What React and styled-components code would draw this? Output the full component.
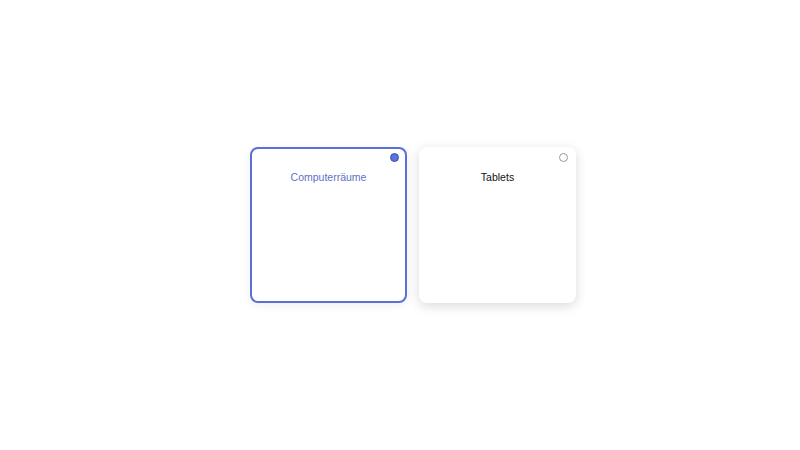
import React, { useState } from "react";
import styled, { createGlobalStyle } from "styled-components";

const Global = createGlobalStyle`
  html, body { margin: 0; padding: 0; background: #fff; }
  body { font-family: "Liberation Sans", Arial, sans-serif; }
`;

const Page = styled.div`
  width: 800px;
  height: 450px;
  display: flex;
  align-items: center;
  justify-content: center;
  padding-left: 26px;
  box-sizing: border-box;
`;

const Options = styled.div`
  display: flex;
  gap: 12px;
`;

const Card = styled.label`
  position: relative;
  width: 157px;
  height: 156px;
  box-sizing: border-box;
  border-radius: 8px;
  background: #fff;
  border: 2px solid ${(p) => (p.$selected ? "#5b6fd8" : "transparent")};
  box-shadow: ${(p) => (p.$selected ? "0 2px 10px rgba(0,0,0,0.07)" : "0 3px 12px rgba(0,0,0,0.15)")};
  display: flex;
  flex-direction: column;
  align-items: center;
  padding-top: 21px;
  cursor: pointer;
`;

const Title = styled.span`
  font-size: 10.5px;
  line-height: 14px;
  color: ${(p) => (p.$selected ? "#5f6fc6" : "#111")};
`;

const Radio = styled.span`
  position: absolute;
  top: 4px;
  right: 6px;
  width: 9px;
  height: 9px;
  border-radius: 50%;
  box-sizing: border-box;
  border: 1.5px solid ${(p) => (p.$selected ? "#3a4fb8" : "#9a9a9a")};
  background: ${(p) => (p.$selected ? "#5b70dc" : "#fff")};
`;

const items = ["Computerräume", "Tablets"];

export default function App() {
  const [sel, setSel] = useState(0);
  return (
    <>
      <Global />
      <Page>
        <Options>
          {items.map((t, i) => (
            <Card key={t} $selected={sel === i} onClick={() => setSel(i)}>
              <Radio $selected={sel === i} />
              <Title $selected={sel === i}>{t}</Title>
            </Card>
          ))}
        </Options>
      </Page>
    </>
  );
}
